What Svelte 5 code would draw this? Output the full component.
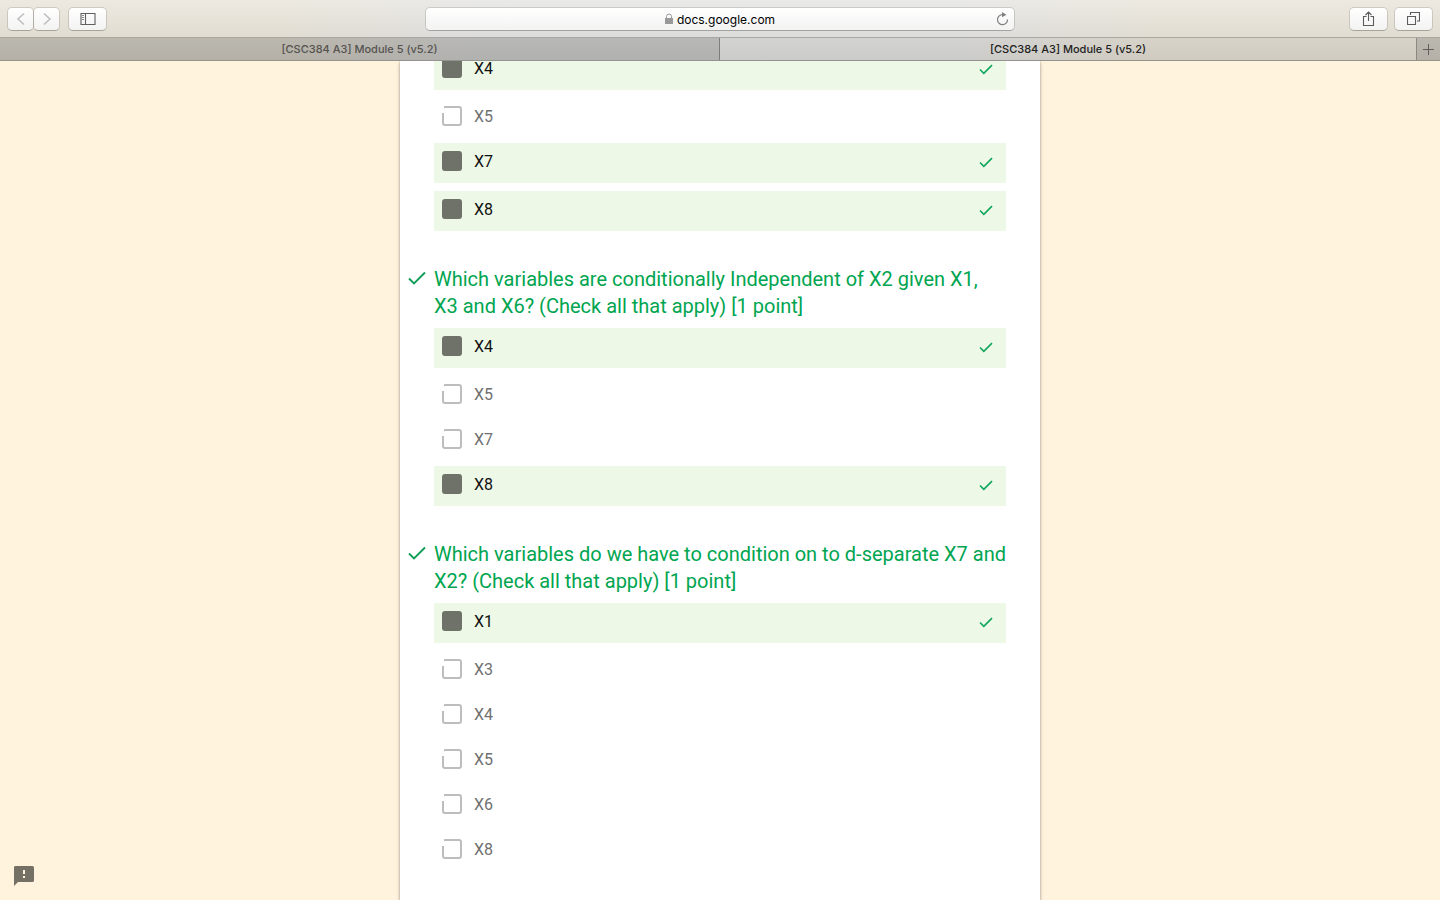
<script>
  const questions = [
    {
      id: 'q1',
      title: '',
      options: [
        { label: 'X4', on: true },
        { label: 'X5', on: false },
        { label: 'X7', on: true },
        { label: 'X8', on: true }
      ]
    },
    {
      id: 'q2',
      title: 'Which variables are conditionally Independent of X2 given X1, X3 and X6? (Check all that apply) [1 point]',
      options: [
        { label: 'X4', on: true },
        { label: 'X5', on: false },
        { label: 'X7', on: false },
        { label: 'X8', on: true }
      ]
    },
    {
      id: 'q3',
      title: 'Which variables do we have to condition on to d-separate X7 and X2? (Check all that apply) [1 point]',
      options: [
        { label: 'X1', on: true },
        { label: 'X3', on: false },
        { label: 'X4', on: false },
        { label: 'X5', on: false },
        { label: 'X6', on: false },
        { label: 'X8', on: false }
      ]
    }
  ];
</script>

<div class="window">
  <header>
    <div class="toolbar">
      <div class="side">
        <div class="pair">
          <button class="tool nav" aria-label="Back">
            <svg width="10" height="14" viewBox="0 0 10 14"><path d="M8 1.5 2 7l6 5.5" fill="none" stroke="#bebebe" stroke-width="1.6" /></svg>
          </button>
          <button class="tool nav" aria-label="Forward">
            <svg width="10" height="14" viewBox="0 0 10 14"><path d="M2 1.5 8 7l-6 5.5" fill="none" stroke="#bebebe" stroke-width="1.6" /></svg>
          </button>
        </div>
        <button class="tool" aria-label="Show sidebar">
          <svg width="16" height="12" viewBox="0 0 16 12"><path d="M1 .5h14v11H1zM5.5.5v11" fill="none" stroke="#606060" stroke-width="1.100" /><path d="M2 2.5h2M2 4.5h2M2 6.5h2" stroke="#8a8a8a" /></svg>
        </button>
      </div>
      <div class="address">
        <span class="host">
          <svg width="8" height="11" viewBox="0 0 8 11"><path d="M0 5h8v6H0z" fill="#999" /><path d="M1.500 5V3.500a2.500 2.500 0 0 1 5 0V5" fill="none" stroke="#999" /></svg>
          <a href="#top">docs.google.com</a>
        </span>
        <button class="reload" aria-label="Reload">
          <svg width="14" height="14" viewBox="0 0 14 14"><path d="M6.500 2.700a5 5 0 1 0 5 4.800" fill="none" stroke="#808080" stroke-width="1.200" /><path d="M6 0 10.500 2.800 6 5.300z" fill="#808080" /></svg>
        </button>
      </div>
      <div class="side end">
        <button class="tool" aria-label="Share">
          <svg width="13" height="16" viewBox="0 0 13 16"><path d="M4.500 5.500h-3v9h10v-9h-3M6.500 10V1.500M3.500 4l3-3 3 3" fill="none" stroke="#5c5c5c" stroke-width="1.100" /></svg>
        </button>
        <button class="tool" aria-label="Show all tabs">
          <svg width="13" height="13" viewBox="0 0 13 13"><path d="M.5 4.500h8v8h-8zM3.500 3V.5h9v8.500H10" fill="none" stroke="#5c5c5c" stroke-width="1.100" /></svg>
        </button>
      </div>
    </div>
    <nav class="tabs" aria-label="Tabs">
      <button class="tab">[CSC384 A3] Module 5 (v5.2)</button>
      <button class="tab active">[CSC384 A3] Module 5 (v5.2)</button>
      <button class="add" aria-label="New tab">
        <svg width="11" height="11" viewBox="0 0 11 11"><path d="M5.500 0v11M0 5.500h11" stroke="#625f58" /></svg>
      </button>
    </nav>
  </header>

  <main id="top">
    <div class="sheet">
      {#each questions as q (q.id)}
        <section>
          {#if q.title}
            <h2>
              <svg class="mark" width="18" height="14" viewBox="0 0 18 14"><path d="M1 7.500 6 12.500 17 1.500" fill="none" stroke="#0f9d58" stroke-width="1.900" /></svg>
              {q.title}
            </h2>
          {/if}
          <ul>
            {#each q.options as o (o.label)}
              <li class:correct={o.on}>
                <input type="checkbox" id="{q.id}-{o.label}" checked={o.on} />
                <label for="{q.id}-{o.label}">{o.label}</label>
                {#if o.on}
                  <svg width="14" height="11" viewBox="0 0 14 11"><path d="M1 5.500 4.800 9.300 13 1.100" fill="none" stroke="#0fa65c" stroke-width="1.600" /></svg>
                {/if}
              </li>
            {/each}
          </ul>
        </section>
      {/each}
    </div>
    <button class="report" aria-label="Report a problem">
      <svg width="20" height="20" viewBox="0 0 20 20"><path d="M1.500 0h17A1.500 1.500 0 0 1 20 1.500v13a1.500 1.500 0 0 1-1.500 1.500H4l-4 4V1.500A1.500 1.500 0 0 1 1.500 0z" fill="#757065" /><path d="M9 4h2v4H9zM9 10h2v2H9z" fill="#fff3dd" /></svg>
    </button>
  </main>
</div>

<style>
  :global(body) {
    margin: 0;
  }
  .window {
    display: flex;
    flex-direction: column;
    height: 100vh;
    font-family: Roboto, sans-serif;
    background: #fff3de;
  }
  button {
    padding: 0;
    border: 0;
    background: none;
    font: inherit;
  }
  svg {
    display: block;
    flex: none;
  }
  header {
    font-family: Inter, sans-serif;
    background:
      linear-gradient(#ffffff40, #00000010),
      linear-gradient(90deg, #e7e2d6 0%, #e7e2d6 20%, #e2e2e1 34%, #e2e2e1 66%, #e7e2d6 80%, #e7e2d6 100%);
  }
  .toolbar {
    display: grid;
    grid-template-columns: 1fr minmax(0, 590px) 1fr;
    align-items: center;
    height: 37px;
    padding: 0 7px;
  }
  .side {
    display: flex;
    gap: 8px;
  }
  .end {
    justify-content: flex-end;
    gap: 6px;
  }
  .pair {
    display: flex;
  }
  .tool,
  .address {
    box-sizing: border-box;
    height: 24px;
    border: 1px solid #00000020;
    border-bottom-color: #00000044;
    border-radius: 5px;
    background: linear-gradient(#fff, #f3f3f2) padding-box;
  }
  .tool {
    display: flex;
    align-items: center;
    justify-content: center;
    width: 39px;
  }
  .nav {
    width: 27px;
  }
  .nav + .nav {
    margin-left: -1px;
  }
  .address {
    display: grid;
    grid-template-columns: 1fr auto 1fr;
    align-items: center;
    padding: 0 4px;
  }
  .host {
    grid-column: 2;
    display: flex;
    align-items: center;
    gap: 4px;
  }
  .host a {
    padding-top: 2px;
    color: #000;
    font-size: 12px;
    line-height: 16px;
    text-decoration: none;
  }
  .reload {
    justify-self: end;
  }
  .tabs {
    display: grid;
    grid-template-columns: 720fr 696fr 24px;
    height: 22px;
    border-top: 1px solid #0000003d;
    border-bottom: 1px solid #0000004d;
  }
  .tab {
    color: #55534f;
    font-size: 11px;
    font-weight: 500;
    line-height: 22px;
    background: #0000002a;
    border-right: 1px solid #0000004d;
  }
  .tab.active {
    color: #222;
    background: #0000000a;
    border-right: 0;
  }
  .add {
    display: flex;
    align-items: center;
    justify-content: center;
    background: #0000002a;
    border-left: 1px solid #0000003d;
  }
  main {
    flex: 1;
    min-height: 0;
    overflow: hidden;
  }
  .sheet {
    display: flow-root;
    box-sizing: border-box;
    max-width: 640px;
    min-height: 100%;
    margin: 0 auto;
    padding: 0 34px 32px;
    background: #fff;
    box-shadow: 0 0 2px #00000040, 0 2px 4px #0000003d;
  }
  section + section {
    padding-top: 35px;
  }
  section:first-child {
    margin-top: -11px;
  }
  h2 {
    position: relative;
    margin: 0 0 8px;
    color: #00a550;
    font-size: 20px;
    font-weight: 400;
    line-height: 27px;
  }
  .mark {
    position: absolute;
    top: 5px;
    left: -26px;
  }
  ul {
    display: flex;
    flex-direction: column;
    gap: 8px;
    margin: 0;
    padding: 0;
    list-style: none;
  }
  li {
    box-sizing: border-box;
    display: flex;
    align-items: flex-start;
    gap: 12px;
    height: 37px;
    padding: 8px 13px 0 8px;
    color: #707070;
    font-size: 16px;
    line-height: 22px;
  }
  li.correct {
    height: 40px;
    color: #111;
    background: #edf8e7;
  }
  li svg {
    margin: 6px 0 0 auto;
  }
  input {
    position: relative;
    box-sizing: border-box;
    flex: none;
    width: 20px;
    height: 20px;
    margin: 0;
    appearance: none;
    border: 2px solid #bdbdbd;
    border-radius: 3px;
  }
  input:not(:checked)::before {
    content: '';
    position: absolute;
    top: -2px;
    left: -2px;
    width: 2px;
    height: 7px;
    background: #fff;
  }
  input:checked {
    border-color: #6e7269;
    background: #6e7269;
  }
  .report {
    position: fixed;
    bottom: 14px;
    left: 14px;
  }
</style>
